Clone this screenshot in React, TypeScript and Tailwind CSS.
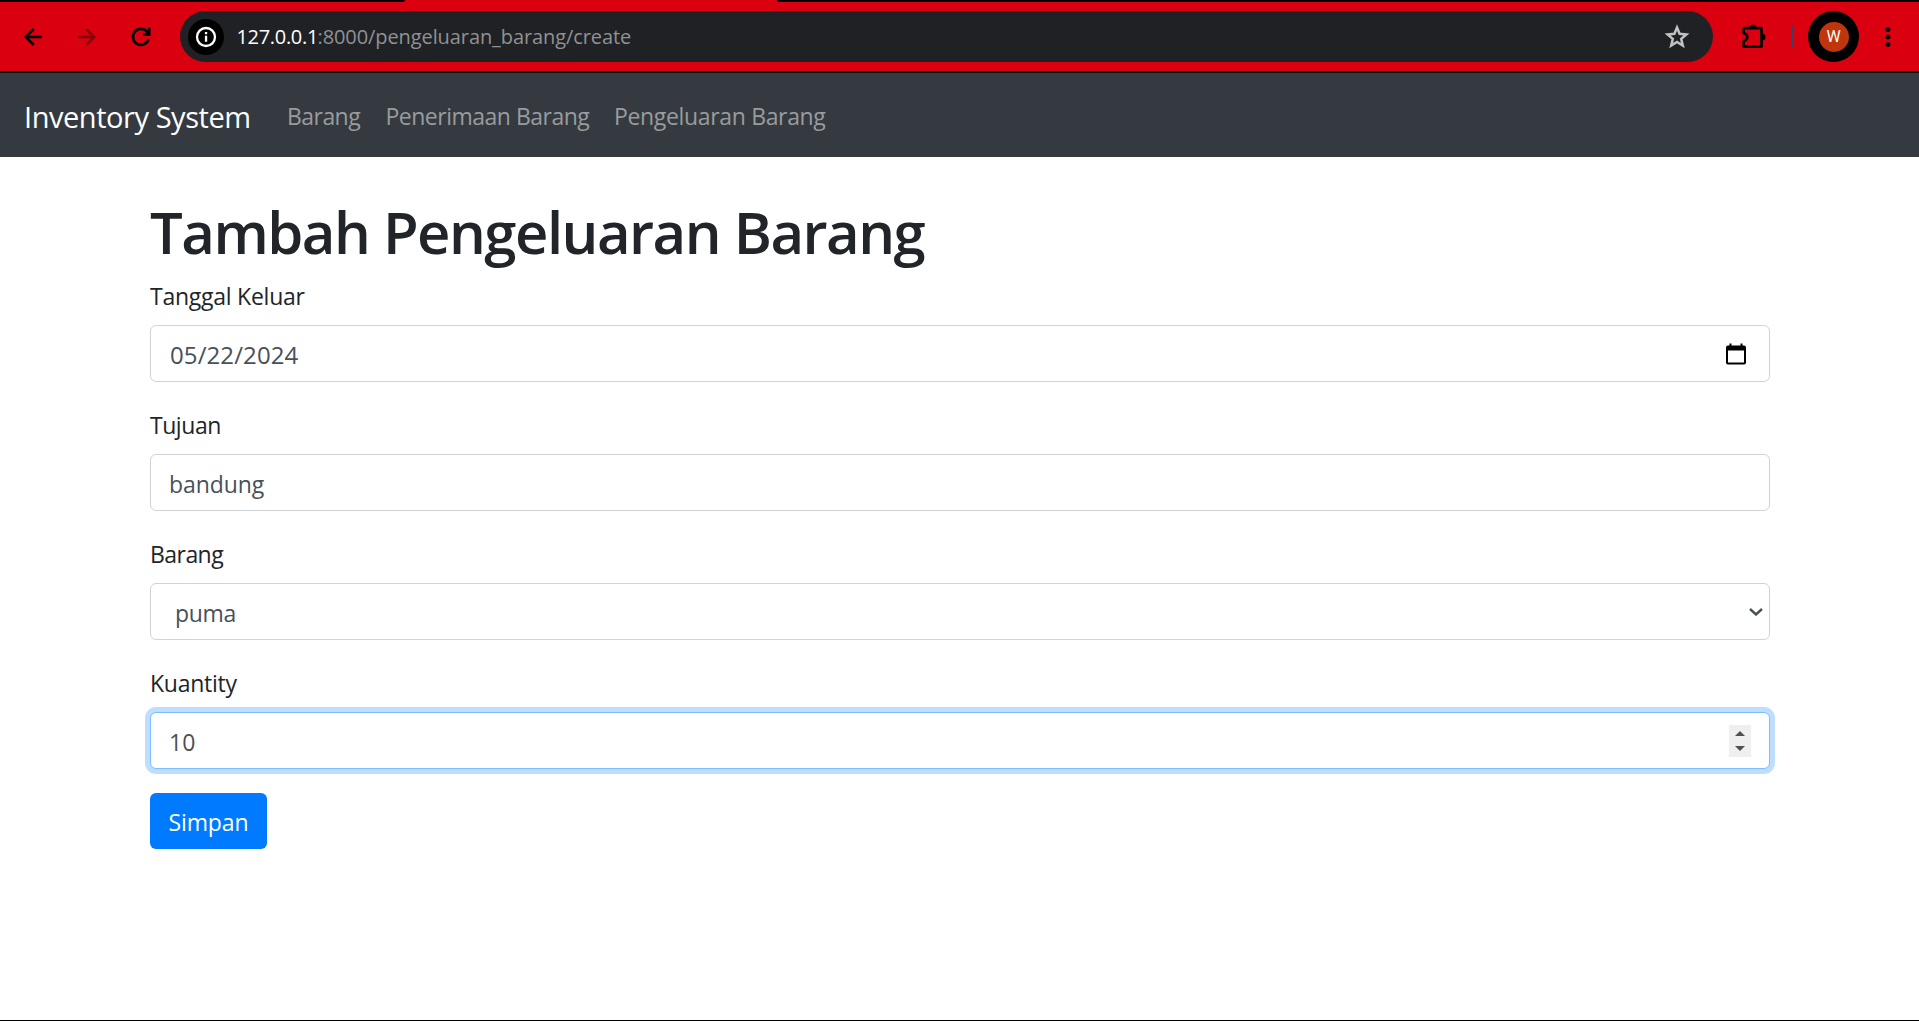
import { MdMoreVert } from "react-icons/md";
import type { ReactNode } from "react";

function BrowserBar() {
  return (
    <header className="relative flex h-[73px] items-center border-b-2 border-t-2 border-black bg-[#db000f] text-black">
      <div className="absolute -top-0.5 left-[404px] h-0.5 w-[374px] rounded-t-sm bg-[#db000f]" />
      <svg className="ml-6 size-[18px]" viewBox="0 0 18 18" fill="none" stroke="currentColor" strokeWidth="2.500">
        <path d="M18 9H2M9.800 1L1.800 9l8 8" />
      </svg>
      <svg className="ml-9 size-[18px] text-[#83000a]" viewBox="0 0 18 18" fill="none" stroke="currentColor" strokeWidth="2.500">
        <path d="M0 9H16M8.200 1l8 8-8 8" />
      </svg>
      <svg className="ml-[34px] size-[22px]" viewBox="0 0 22 22" fill="none" stroke="currentColor" strokeWidth="2.700">
        <path d="M18.600 13.200A8 8 0 1 1 17.400 6.200L19 8.200M19.200 1.800V8.300H13" />
      </svg>
      <div className="ml-7 flex h-[51px] w-[1533px] items-center rounded-full bg-[#202124]">
        <div className="ml-[7.5px] flex size-9 items-center justify-center rounded-full bg-black">
          <svg className="size-[22px] text-white" viewBox="0 0 22 22">
            <circle cx="11" cy="11" r="9" fill="none" stroke="currentColor" strokeWidth="2.300" />
            <path d="M9.900 9.800h2.300v6H9.900ZM9.900 6h2.300v2.300H9.900Z" fill="currentColor" />
          </svg>
        </div>
        <div className="ml-[13px] flex text-[20px] text-[#8f9194]">
          <span className="w-[81px] tracking-[-0.32px] text-white">127.0.0.1</span>
          <span className="tracking-[-0.09px]">:8000/pengeluaran_barang/create</span>
        </div>
        <svg className="ml-auto mr-[23px] size-[26px] text-[#c0c1c2]" viewBox="0 0 26 26">
          <path
            d="M13 3.500l2.600 6.300 6.800.6-5.200 4.500 1.600 6.700L13 18l-5.800 3.600 1.600-6.700L3.600 10.400l6.800-.6Z"
            fill="none"
            stroke="currentColor"
            strokeWidth="2.500"
          />
        </svg>
      </div>
      <svg className="ml-7 h-[26px] w-[26px]" viewBox="0 0 26 26">
        <path
          d="M3.500 4.200H20.500V22.500H2.700V17.200C7.500 15.500 7.500 10.500 2.700 9V5Z"
          fill="none"
          stroke="currentColor"
          strokeWidth="2.700"
          strokeLinejoin="round"
        />
        <path d="M8.500 4a3.500 3.500 0 0 1 7 0ZM21 9.500a3.500 3.500 0 0 1 0 7Z" fill="currentColor" />
      </svg>
      <div className="ml-6 h-[23px] w-[3px] bg-[#3c3f63]" />
      <div className="ml-[14px] flex size-[51px] items-center justify-center rounded-full bg-black">
        <div className="flex size-[30px] items-center justify-center rounded-full bg-[#bf360c] font-[Roboto,sans-serif] text-[16px] text-white">W</div>
      </div>
      <MdMoreVert className="ml-[13.5px] size-[30px]" />
    </header>
  );
}

function NavBar() {
  return (
    <nav className="flex h-[84px] items-center bg-[#343a40] pl-6 pt-[3px] text-[23px] text-[#999c9f]">
      <a className="w-[263px] text-[29px] leading-[38px] tracking-[-0.45px] text-white">Inventory System</a>
      <a className="w-[98.5px] tracking-[-0.55px]">Barang</a>
      <a className="w-[228.5px] tracking-[-0.5px]">Penerimaan Barang</a>
      <a className="tracking-[-0.34px]">Pengeluaran Barang</a>
    </nav>
  );
}

function Field({ label, labelClass, className = "border-[#ced4da]", children }: { label: string; labelClass: string; className?: string; children: ReactNode }) {
  return (
    <div className="mb-6">
      <label className={"mb-3 block h-9 leading-[38px] " + labelClass}>{label}</label>
      <div className={"flex h-[57px] items-center rounded-[6px] border bg-white pl-[18px] text-[#495057] " + className}>{children}</div>
    </div>
  );
}

export default function App() {
  return (
    <div className="flex h-[1021px] flex-col overflow-hidden border-b border-black bg-white font-['Open_Sans',sans-serif]">
      <BrowserBar />
      <NavBar />
      <main className="mx-[150px] w-[1620px] pt-9 text-[23px] text-[#212529]">
        <h1 className="mb-3 h-[72px] whitespace-nowrap text-[58px] font-[550] leading-[78px] tracking-[-1.5px]">Tambah Pengeluaran Barang</h1>
        <Field label="Tanggal Keluar" labelClass="tracking-[-0.25px]">
          <span className="ml-px pt-[2px] text-[24px] tracking-[0.1px]">05/22/2024</span>
          <svg className="ml-auto mr-[23px] h-[22px] w-5" viewBox="0 0 20 22">
            <path d="M3.500 0.500h2v2h9v-2h2v2h1.500a2 2 0 0 1 2 2V19.500a2 2 0 0 1-2 2H2a2 2 0 0 1-2-2V4.500a2 2 0 0 1 2-2h1.500ZM2 7.500V19.500H18V7.500Z" fill="#000" fillRule="evenodd" />
          </svg>
        </Field>
        <Field label="Tujuan" labelClass="tracking-[-0.45px]">
          <span className="pt-[3px] tracking-[-0.1px]">bandung</span>
        </Field>
        <Field label="Barang" labelClass="tracking-[-0.55px]">
          <span className="ml-[6px] pt-[3px] tracking-[-0.3px]">puma</span>
          <svg className="ml-auto mr-[6px] h-2 w-[14px]" viewBox="0 0 14 8">
            <path d="M1 1l6 5.500L13 1" fill="none" stroke="#495057" strokeWidth="2.400" />
          </svg>
        </Field>
        <Field label="Kuantity" labelClass="tracking-[-0.25px]" className="border-[#80bdff] shadow-[0_0_0_5px_#bfdeff]">
          <span className="pt-[3px]">10</span>
          <div className="ml-auto mr-[18px] flex h-8 w-[22px] flex-col items-center justify-between bg-[#efefef] py-[6px]">
            <svg className="h-[5px] w-[10px]" viewBox="0 0 10 5">
              <path d="M0 5L5 0l5 5Z" fill="#505050" />
            </svg>
            <svg className="h-[5px] w-[10px]" viewBox="0 0 10 5">
              <path d="M0 0l5 5 5-5Z" fill="#505050" />
            </svg>
          </div>
        </Field>
        <button className="flex h-[56px] w-[117px] items-center justify-center rounded-[6px] bg-[#007bff] pt-[3px] tracking-[-0.1px] text-white">Simpan</button>
      </main>
    </div>
  );
}
